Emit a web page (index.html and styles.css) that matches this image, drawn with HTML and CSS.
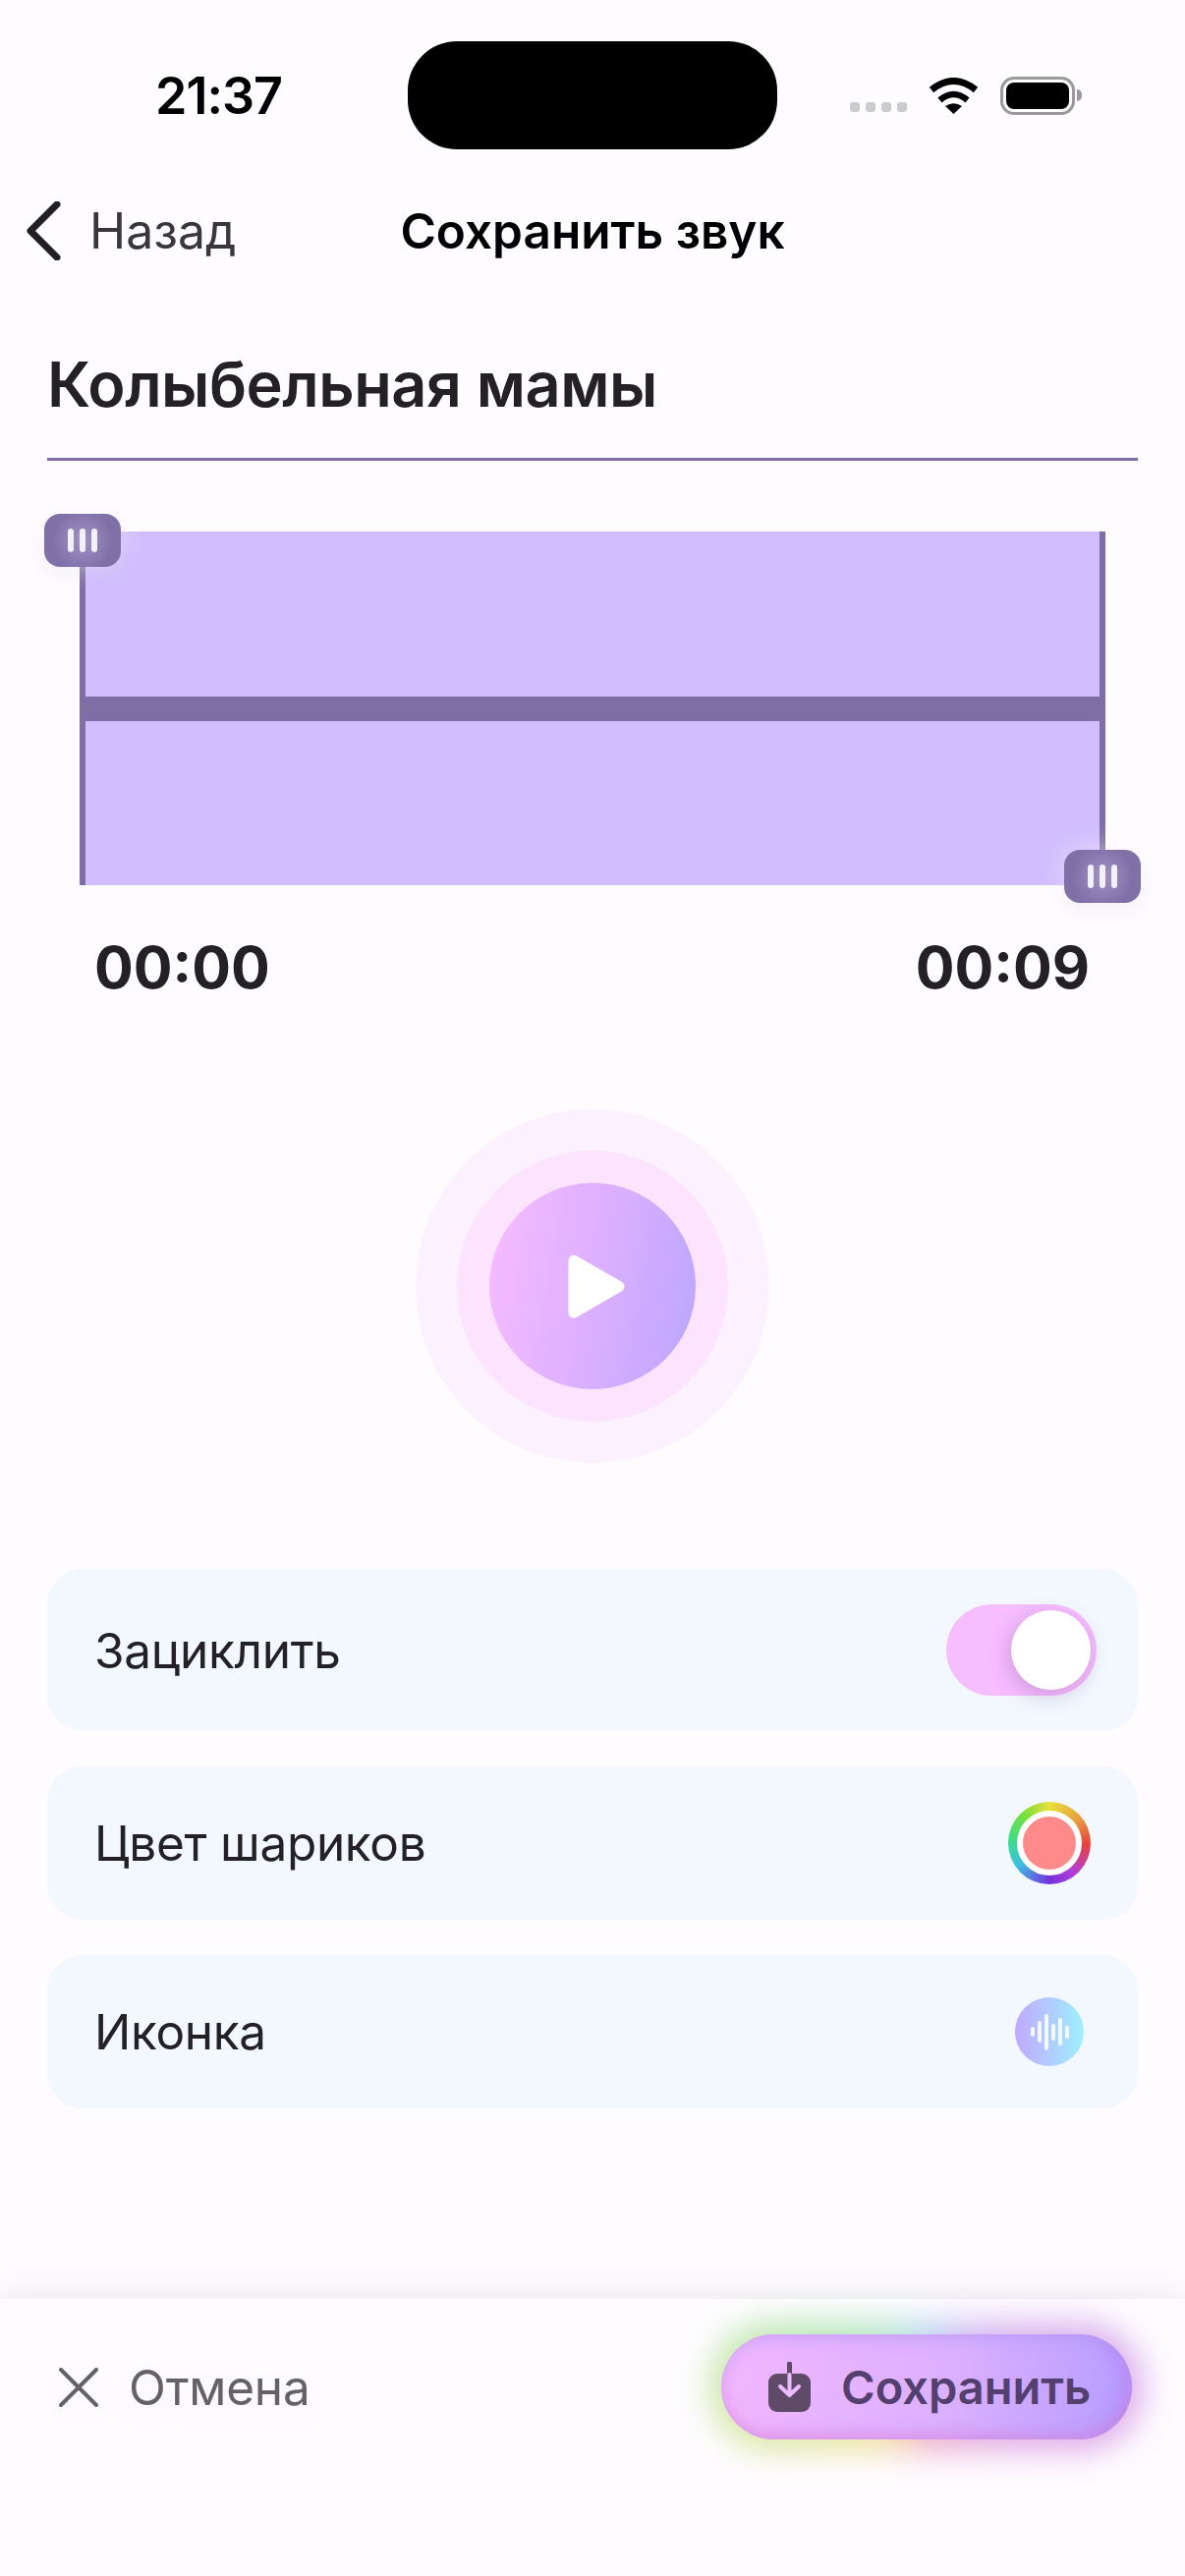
FILE: index.html
```html
<!DOCTYPE html>
<html lang="ru">
<head>
    <meta charset="UTF-8">
    <title>Сохранить звук</title>
    <link rel="stylesheet" href="styles.css">
</head>
<body>
<div class="page">

    <div class="status">
        <div class="clock">21:37</div>
        <div class="island"></div>
        <div class="status-right">
            <div class="dots"><i></i><i></i><i></i><i></i></div>
            <svg class="wifi" width="51" height="37" viewBox="0 0 51 37">
                <path d="M3 12.5 Q25.5 -5.5 48 12.5" fill="none" stroke="#000" stroke-width="7"/>
                <path d="M11.5 23 Q25.5 11 39.500 23" fill="none" stroke="#000" stroke-width="6.500"/>
                <path d="M17 29 Q25.500 23.500 34 29 L25.500 37 Z" fill="#000"/>
            </svg>
            <div class="battery"><div class="battery-fill"></div></div>
        </div>
    </div>

    <div class="nav">
        <div class="back">
            <svg width="36" height="60" viewBox="0 0 36 60">
                <path d="M32 3 L5 30 L32 57" fill="none" stroke="#222024" stroke-width="7" stroke-linecap="round" stroke-linejoin="round"/>
            </svg>
            <span>Назад</span>
        </div>
        <div class="nav-title">Сохранить звук</div>
    </div>

    <div class="name-field">Колыбельная мамы</div>

    <div class="wave">
        <div class="wave-band"></div>
        <div class="grip grip-start"><i></i><i></i><i></i></div>
        <div class="grip grip-end"><i></i><i></i><i></i></div>
    </div>

    <div class="times">
        <span>00:00</span>
        <span>00:09</span>
    </div>

    <div class="play">
        <div class="play-outer">
            <div class="play-mid">
                <div class="play-btn">
                    <svg width="58" height="65" viewBox="0 0 58 65">
                        <path d="M6 6 L52 32.500 L6 59 Z" fill="#fff" stroke="#fff" stroke-width="11" stroke-linejoin="round"/>
                    </svg>
                </div>
            </div>
        </div>
    </div>

    <div class="options">
        <div class="row row-loop">
            <span>Зациклить</span>
            <div class="toggle"><div class="knob"></div></div>
        </div>
        <div class="row">
            <span>Цвет шариков</span>
            <div class="color-ring"><div class="color-dot"></div></div>
        </div>
        <div class="row">
            <span>Иконка</span>
            <div class="sound-icon">
                <i class="h10"></i><i class="h22"></i><i class="h37"></i><i class="h17"></i><i class="h28"></i><i class="h13"></i>
            </div>
        </div>
    </div>

    <div class="footer">
        <div class="cancel">
            <svg width="40" height="40" viewBox="0 0 40 40">
                <path d="M2 2 L38 38 M38 2 L2 38" fill="none" stroke="#646266" stroke-width="4" stroke-linecap="round"/>
            </svg>
            <span>Отмена</span>
        </div>
        <div class="save">
            <svg width="43" height="51" viewBox="0 0 43 51">
                <rect x="0" y="12" width="43" height="39" rx="9" fill="#5f4a68"/>
                <path d="M21.500 2 V32" fill="none" stroke="#5f4a68" stroke-width="5" stroke-linecap="round"/>
                <path d="M21.500 13 V32 M12 25 L21.500 34 L31 25" fill="none" stroke="#ecbcff" stroke-width="4" stroke-linecap="round" stroke-linejoin="round"/>
            </svg>
            <span>Сохранить</span>
        </div>
    </div>

</div>
</body>
</html>
```

FILE: styles.css
```css
* {
    box-sizing: border-box;
}

body {
    margin: 0;
    background-color: #fefcff;
    font-family: 'Inter', 'Noto Sans', sans-serif;
    color: #232125;
}

.page {
    width: 1206px;
    height: 2622px;
    display: flex;
    flex-direction: column;
    overflow: hidden;
}

/* status bar */
.status {
    height: 152px;
    padding-top: 42px;
    display: grid;
    grid-template-columns: 415px 376px 1fr;
    align-items: center;
}

.clock {
    padding-left: 158px;
    font-size: 52px;
    font-weight: 600;
    letter-spacing: -1px;
    color: #000;
}

.island {
    height: 110px;
    background: #000;
    border-radius: 50px;
}

.status-right {
    display: flex;
    align-items: center;
    padding-left: 74px;
}

.dots {
    display: flex;
    gap: 6px;
    margin-top: 24px;
}

.dots i {
    width: 10px;
    height: 10px;
    border-radius: 3px;
    background: #cccbcd;
}

.wifi {
    margin-left: 22px;
}

.battery {
    position: relative;
    margin-left: 22px;
    width: 76px;
    height: 39px;
    padding: 3px;
    border: 3.5px solid #9a9a9a;
    border-radius: 14px;
}

.battery:after {
    content: "";
    position: absolute;
    right: -10px;
    top: 10px;
    width: 5px;
    height: 12px;
    background: #9a9a9a;
    border-radius: 0 6px 6px 0;
}

.battery-fill {
    height: 100%;
    background: #000;
    border-radius: 8px;
}

/* nav */
.nav {
    position: relative;
    height: 166px;
    display: flex;
    align-items: center;
    justify-content: center;
}

.back {
    position: absolute;
    left: 26px;
    top: 53px;
    display: flex;
    align-items: center;
    gap: 29px;
    font-size: 50px;
    color: #39373b;
}

.nav-title {
    font-size: 49.500px;
    font-weight: 600;
    color: #000;
}

/* name */
.name-field {
    margin: 0 48px;
    height: 151px;
    padding-top: 39px;
    border-bottom: 3px solid #7d6fa5;
    font-size: 63px;
    line-height: 68px;
    font-weight: 600;
    letter-spacing: -0.500px;
}

/* waveform */
.wave {
    position: relative;
    margin: 72px 0 0 81px;
    width: 1044px;
    height: 360px;
    background: #d1bdff;
    border-left: 6px solid #7d6fa5;
    border-right: 6px solid #7d6fa5;
    display: flex;
    align-items: center;
}

.wave-band {
    width: 100%;
    height: 25px;
    background: #7d6fa5;
}

.grip {
    position: absolute;
    width: 78px;
    height: 54px;
    display: flex;
    align-items: center;
    justify-content: center;
    gap: 6px;
    border-radius: 16px;
    background: radial-gradient(circle, #a193c4 0%, #7f70a8 65%);
    box-shadow: 0 0 26px rgba(255, 255, 255, 0.55), 0 6px 18px rgba(60, 50, 90, 0.08);
}

.grip i {
    width: 6px;
    height: 24px;
    border-radius: 3px;
    background: #f2f1f7;
}

.grip-start {
    left: -42px;
    top: -18px;
}

.grip-end {
    right: -42px;
    bottom: -18px;
}

.times {
    margin-top: 54px;
    padding: 0 97px 0 96px;
    display: flex;
    justify-content: space-between;
    font-size: 59px;
    line-height: 60px;
    font-weight: 700;
}

/* play */
.play {
    margin-top: 114px;
    display: flex;
    justify-content: center;
}

.play-outer,
.play-mid,
.play-btn {
    border-radius: 50%;
    display: flex;
    align-items: center;
    justify-content: center;
}

.play-outer {
    width: 360px;
    height: 360px;
    background: #fcf1ff;
}

.play-mid {
    width: 276px;
    height: 276px;
    background: #fce4ff;
}

.play-btn {
    width: 210px;
    height: 210px;
    background: linear-gradient(100deg, #f8bcff 0%, #d8aeff 58%, #baa6ff 100%);
}

.play-btn svg {
    margin-left: 8px;
}

/* options */
.options {
    margin: 108px 48px 0;
    display: flex;
    flex-direction: column;
    gap: 36px;
}

.row {
    height: 156px;
    padding: 0 48px 0 48px;
    display: flex;
    align-items: center;
    justify-content: space-between;
    background: #f3f8ff;
    border-radius: 36px;
    font-size: 49.500px;
    letter-spacing: -0.300px;
}

.row-loop {
    height: 165px;
    padding-right: 42px;
}

.toggle {
    width: 153px;
    height: 93px;
    padding: 6px;
    display: flex;
    justify-content: flex-end;
    background: #f6bdff;
    border-radius: 47px;
}

.knob {
    width: 81px;
    height: 81px;
    background: #fff;
    border-radius: 50%;
    box-shadow: -2px 6px 22px rgba(110, 60, 130, 0.28);
}

.color-ring {
    width: 84px;
    height: 84px;
    display: flex;
    align-items: center;
    justify-content: center;
    border-radius: 50%;
    background: conic-gradient(#e6e03a 0deg, #e8a040 50deg, #e83f3f 92deg, #b53ed8 140deg, #7433dc 180deg, #3cc0e2 235deg, #3ddd86 275deg, #7ce03a 320deg, #e6e03a 360deg);
}

.color-dot {
    width: 66px;
    height: 66px;
    border: 6px solid #fff;
    border-radius: 50%;
    background: #ff8a8a;
}

.sound-icon {
    width: 70px;
    height: 70px;
    margin-right: 7px;
    display: flex;
    align-items: center;
    justify-content: center;
    gap: 3px;
    border-radius: 50%;
    background: linear-gradient(90deg, #c2a8ff 0%, #9ff0ff 100%);
}

.sound-icon i {
    width: 4px;
    border-radius: 2px;
    background: #f4f8ff;
}

.h10 { height: 10px; }
.h13 { height: 13px; }
.h17 { height: 17px; }
.h22 { height: 22px; }
.h28 { height: 28px; }
.h37 { height: 37px; }

/* bottom bar */
.footer {
    position: relative;
    z-index: 0;
    margin-top: auto;
    height: 282px;
    padding: 36px 54px 0 60px;
    display: flex;
    align-items: flex-start;
    justify-content: space-between;
    background: #fefcff;
    box-shadow: 0 -6px 30px rgba(60, 50, 70, 0.09);
}

.cancel {
    height: 107px;
    display: flex;
    align-items: center;
    gap: 31px;
    font-size: 49.500px;
    letter-spacing: -0.200px;
    color: #646266;
    filter: drop-shadow(0 10px 14px rgba(60, 50, 70, 0.05));
}

.save {
    position: relative;
    width: 418px;
    height: 107px;
    padding-left: 48px;
    display: flex;
    align-items: center;
    gap: 31px;
    border-radius: 54px;
    background: linear-gradient(100deg, #f2b6ff 0%, #dcb0ff 55%, #b49cff 100%);
    box-shadow: inset 0 8px 14px rgba(150, 170, 240, 0.2), inset 0 -8px 14px rgba(220, 130, 200, 0.35), inset -10px 0 16px rgba(190, 120, 240, 0.4);
    font-size: 47px;
    font-weight: 600;
    color: #54406e;
}

.save:before {
    content: "";
    position: absolute;
    z-index: -1;
    inset: -12px;
    border-radius: 64px;
    background: conic-gradient(#a9cdf2 0deg, #cfa6ee 50deg, #dca0e6 110deg, #eda0c0 180deg, #f2df90 225deg, #cfe59a 260deg, #a5e3ac 300deg, #a9dfd8 340deg, #a9cdf2 360deg);
    filter: blur(16px);
    opacity: 0.85;
}
```
